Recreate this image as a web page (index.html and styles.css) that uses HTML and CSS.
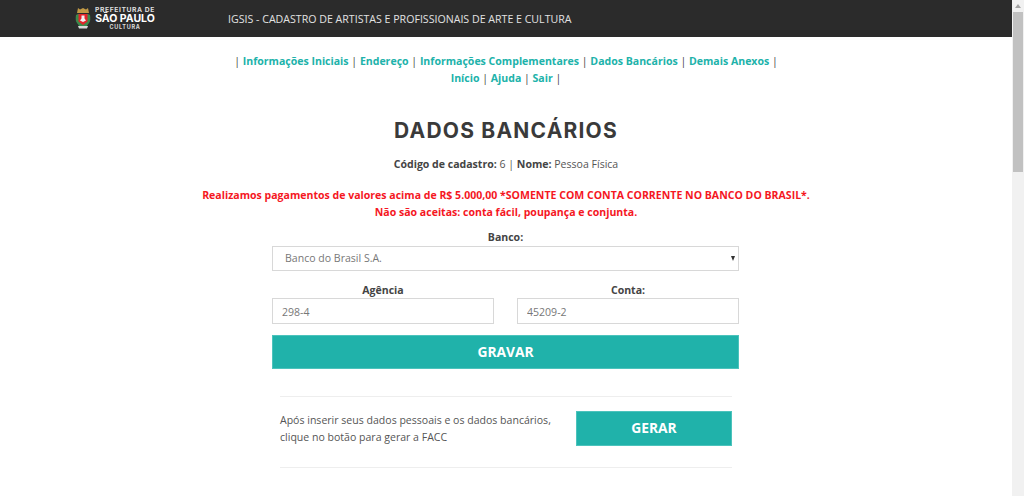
FILE: index.html
```html
<!DOCTYPE html>
<html lang="en">
<head>
  <meta charset="utf-8">
  <title>IGSIS - Dados Bancários</title>
  <link rel="stylesheet" href="styles.css">
</head>
<body>
  <div class="page">
    <div class="header">
      <div class="logo">
        <svg class="crest" width="16" height="21" viewBox="0 0 16 21">
          <path d="M3 0l2 1.500L8 0l3 1.500L13 0l1 5H2z" fill="#c29a45"/>
          <path d="M1 7q-1 5 1 8l3 4h6l3-4q2-3 1-8l-2-1H3z" fill="#3c8a4c"/>
          <path d="M3.500 6h9v7.500L8 17l-4.500-3.500z" fill="#e2252b"/>
          <path d="M6.500 7.500h3v3l1.500 2-3 1.500-3-1.500 1.500-2z" fill="#f2f2f2"/>
          <path d="M3 18h10l-1 2.500H4z" fill="#d9d9d9"/>
        </svg>
        <div class="logo-text">
          <div class="logo-top">PREFEITURA DE</div>
          <div class="logo-main">SÃO PAULO</div>
          <div class="logo-sub">CULTURA</div>
        </div>
      </div>
      <div class="site-title">IGSIS - CADASTRO DE ARTISTAS E PROFISSIONAIS DE ARTE E CULTURA</div>
    </div>

    <div class="content">
      <div class="menu">
        <div>| <a href="#">Informações Iniciais</a> | <a href="#">Endereço</a> | <a href="#">Informações Complementares</a> | <a href="#">Dados Bancários</a> | <a href="#">Demais Anexos</a> |</div>
        <div><a href="#">Início</a> | <a href="#">Ajuda</a> | <a href="#">Sair</a> |</div>
      </div>

      <h2>DADOS BANCÁRIOS</h2>
      <p class="cadastro"><strong>Código de cadastro:</strong> 6 | <strong>Nome:</strong> Pessoa Física</p>
      <p class="alerta">Realizamos pagamentos de valores acima de R$ 5.000,00 *SOMENTE COM CONTA CORRENTE NO BANCO DO BRASIL*.<br>Não são aceitas: conta fácil, poupança e conjunta.</p>

      <form class="form">
        <div class="field">
          <label>Banco:</label>
          <div class="select">Banco do Brasil S.A.<span class="arrow"></span></div>
        </div>
        <div class="form-row">
          <div class="field">
            <label>Agência</label>
            <input class="input" type="text" value="298-4">
          </div>
          <div class="field">
            <label>Conta:</label>
            <input class="input" type="text" value="45209-2">
          </div>
        </div>
        <button type="button" class="btn btn-wide">GRAVAR</button>
      </form>

      <div class="facc">
        <p>Após inserir seus dados pessoais e os dados bancários, clique no botão para gerar a FACC</p>
        <button type="button" class="btn btn-gerar">GERAR</button>
      </div>
    </div>
  </div>

  <div class="scrollbar">
    <div class="scroll-up"></div>
    <div class="scroll-thumb"></div>
  </div>
</body>
</html>
```

FILE: styles.css
```css
html, body {
  height: 100%;
}

body {
  margin: 0;
  display: flex;
  overflow: hidden;
  background: #fff;
  color: #555;
  font-family: "Open Sans", sans-serif;
  font-size: 10.560px;
}

.page {
  flex: 1;
  min-width: 0;
}

.header {
  height: 37px;
  background: #2b2b2b;
  display: flex;
  align-items: center;
  padding-left: 75px;
}

.logo {
  display: flex;
  align-items: center;
  gap: 4px;
  width: 153px;
  color: #fff;
}

.logo-text {
  width: 60px;
  text-align: center;
  line-height: 9px;
  font-family: "Inter", sans-serif;
  font-weight: 700;
}

.logo-top {
  font-size: 6.800px;
  letter-spacing: 0.55px;
  color: #ddd;
  white-space: nowrap;
}

.logo-main {
  font-size: 10.500px;
  white-space: nowrap;
}

.logo-sub {
  font-size: 5.500px;
  letter-spacing: 0.7px;
  color: #ddd;
}

.site-title {
  color: #e2e2e2;
  font-size: 10.620px;
}

.content {
  padding-top: 16px;
}

.menu {
  text-align: center;
  line-height: 17px;
  color: #444;
}

.menu a {
  color: #20b2aa;
  font-weight: 700;
  text-decoration: none;
}

h2 {
  margin: 29px 0 0;
  text-align: center;
  font-family: "Inter", sans-serif;
  font-size: 21px;
  letter-spacing: 1.200px;
  line-height: 30px;
  font-weight: 700;
  color: #3a3a3a;
}

.cadastro {
  margin: 10px 0 0;
  text-align: center;
  line-height: 16px;
}

.cadastro strong {
  color: #444;
}

.alerta {
  margin: 15px 0 0;
  text-align: center;
  line-height: 17px;
  font-weight: 700;
  color: #f5171f;
}

.form {
  width: 467px;
  margin: 8px 0 0 272px;
}

.field {
  display: flex;
  flex-direction: column;
  flex: 1;
}

.field label {
  text-align: center;
  line-height: 16px;
  font-weight: 700;
  color: #444;
}

.select {
  position: relative;
  height: 25px;
  margin-top: 1px;
  line-height: 23px;
  box-sizing: border-box;
  border: 1px solid #d8d8d8;
  padding-left: 12px;
  color: #777;
}

.arrow {
  position: absolute;
  right: 3px;
  top: 9px;
  border-left: 2.500px solid transparent;
  border-right: 2.500px solid transparent;
  border-top: 5px solid #333;
}

.form-row {
  display: flex;
  gap: 23px;
  margin-top: 11px;
}

.input {
  height: 26px;
  box-sizing: border-box;
  width: 100%;
  border: 1px solid #d8d8d8;
  padding: 2px 9px 0;
  font-family: "Open Sans", sans-serif;
  font-size: 10.560px;
  color: #777;
  outline: none;
}

.btn {
  border: 1px solid #4cc3bc;
  background: #20b2aa;
  color: #fff;
  font-family: "Open Sans", sans-serif;
  font-size: 13.800px;
  font-weight: 700;
  padding-bottom: 3px;
}

.btn-wide {
  display: block;
  width: 100%;
  height: 34px;
  margin-top: 11px;
}

.facc {
  width: 452px;
  box-sizing: border-box;
  margin: 27px 0 0 280px;
  padding: 14px 0 21px;
  border-top: 1px solid #eee;
  border-bottom: 1px solid #eee;
  display: flex;
  align-items: center;
  justify-content: space-between;
}

.facc p {
  margin: 0;
  width: 285px;
  line-height: 17px;
}

.btn-gerar {
  width: 156px;
  height: 35px;
}

.scrollbar {
  width: 12px;
  background: #f1f1f1;
  flex-shrink: 0;
}

.scroll-up {
  height: 12px;
  box-sizing: border-box;
  padding-top: 4px;
}

.scroll-up::before {
  content: "";
  display: block;
  width: 0;
  margin: 0 auto;
  border-left: 3px solid transparent;
  border-right: 3px solid transparent;
  border-bottom: 4px solid #a3a3a3;
}

.scroll-thumb {
  height: 160px;
  margin: 0 1px;
  background: #c1c1c1;
}
```
